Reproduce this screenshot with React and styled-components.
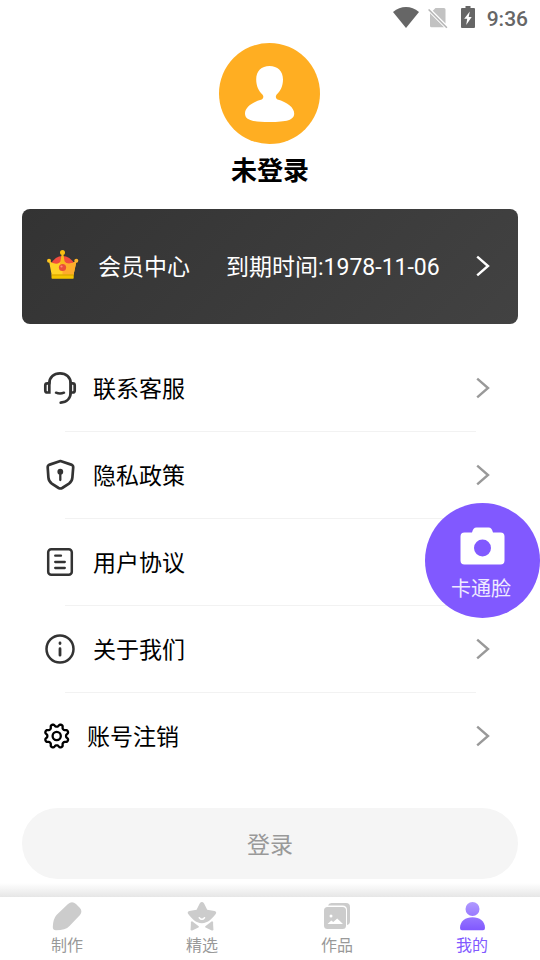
import React from 'react'
import styled, { createGlobalStyle } from 'styled-components'

const colours = {
  text: '#000000',
  icon: '#333333',
  status: '#666666',
  arrow: '#999999',
  divider: '#f2f2f2',
  orange: '#ffae22',
  purple: '#8159ff',
  tab: '#999999',
  tabIcon: '#cccccc',
  button: '#f5f5f5',
}

const GlobalStyle = createGlobalStyle`
  * {
    box-sizing: border-box;
  }

  body {
    background: #fff;
    color: ${colours.text};
    font-family: Roboto, "Noto Sans CJK SC", sans-serif;
    margin: 0;
  }

  svg {
    display: block;
    flex-shrink: 0;
    overflow: visible;
  }
`

// Status bar icons
const WifiIcon = () => (
  <svg width="26" height="22" viewBox="0 0 26 22" fill={colours.status}>
    <path d="M0 6Q6 1 13 1T26 6L13 22Z" />
  </svg>
)

const NoSimIcon = () => (
  <svg width="20" height="22" viewBox="0 0 20 22">
    <path d="M7.500 2H16Q17.500 2 17.500 3.500V17.500L4.800 4.800ZM2 7.300L16 21.300H3.500Q2 21.300 2 19.800Z" fill="#c2c2c2" />
    <path d="M.6 3.500L18.900 21.800" stroke="#b5b5b5" strokeWidth="1.600" />
  </svg>
)

const BatteryIcon = () => (
  <svg width="14" height="22" viewBox="0 0 14 22">
    <path d="M4.500 0H9.500V2H13Q14 2 14 3V21Q14 22 13 22H1Q0 22 0 21V3Q0 2 1 2H4.500Z" fill={colours.status} />
    <path d="M8.800 5.500L3.200 12.700H6.200L5.200 19L10.700 11H7.700Z" fill="#fff" />
  </svg>
)

const AvatarIcon = () => (
  <svg width="102" height="101" viewBox="0 0 102 101">
    <circle cx="50.500" cy="50.500" r="50.500" fill={colours.orange} />
    <path
      fill="#fff"
      d="M50.500 23C58.500 23 64 28 64 36.500C64 43 61.500 48 57.500 51.800C56.300 53.500 56.800 55.500 58.500 56.500C68 59 75.200 64.500 75.200 70.500C75.200 77 68 79 50.500 79C33 79 26 77 26 70.500C26 64.500 33 59 42.700 56.500C44.400 55.500 44.900 53.500 43.600 51.800C39.700 48 37.200 43 37.200 36.500C37.200 28 42.500 23 50.500 23Z"
    />
  </svg>
)

const CrownIcon = () => (
  <svg width="32" height="30" viewBox="0 0 32 30">
    <path d="M4 14Q8 6 15.500 6T27.500 14L22 19H9Z" fill="#f04c3e" />
    <path d="M2 11Q11 17 15.500 9.500Q20 17 29.500 11L26.500 25H4.700Z" fill="#ffd226" />
    <path d="M15.500 9.500Q20 17 29.500 11L26.500 25H15.500Z" fill="#ffac2c" />
    <path d="M4.500 24.500H26.700V28Q26.700 28.700 26 28.700H5.200Q4.500 28.700 4.500 28Z" fill="#f3c400" />
    <path d="M4.500 25H26.700" stroke="#cf9700" strokeWidth=".8" />
    <path d="M14.800 3H16.200L18 14H13Z" fill="#f9b81c" />
    <circle cx="15.500" cy="2.500" r="2.500" fill="#f7be12" />
    <circle cx="2" cy="10.800" r="2" fill="#ffc41d" />
    <circle cx="29.300" cy="10.800" r="2" fill="#ffb52a" />
    <circle cx="15.500" cy="17.500" r="3.600" fill="#e94d3a" />
    <circle cx="14.500" cy="16.500" r="1.100" fill="#ff8c74" />
  </svg>
)

const Chevron = ({ colour = colours.arrow }) => (
  <svg width="14" height="22" viewBox="0 0 14 22" fill="none" stroke={colour} strokeWidth="2.400">
    <path d="M1.200 1.700L12 11L1.200 20.300" />
  </svg>
)

// Menu icons
const HeadsetIcon = () => (
  <svg width="32" height="32" viewBox="0 0 32 32" fill="none" stroke={colours.icon} strokeWidth="2.700" strokeLinecap="round">
    <path d="M5.300 11.500C5.300 5 10 1.300 16 1.300S26.700 5 26.700 11.500V20C26.700 26.500 22.500 30.300 16.700 30.600" />
    <path d="M5.300 11.300H3.300Q1.300 11.300 1.300 13.300V18.500Q1.300 20.500 3.300 20.500H5.300Z" />
    <path d="M26.700 11.300H28.700Q30.700 11.300 30.700 13.300V18.500Q30.700 20.500 28.700 20.500H26.700Z" />
    <path d="M12 20.700Q16 22.400 20 20.700" strokeWidth="2.500" />
  </svg>
)

const ShieldIcon = () => (
  <svg width="32" height="32" viewBox="0 0 32 32" fill="none" stroke={colours.icon} strokeWidth="2.700" strokeLinejoin="round">
    <path d="M16.400 2L27.200 5.600Q29.300 6.400 29.200 8.500L28.400 18.500Q28.100 22.500 25 24.700L18.200 29Q16.400 30 14.600 29L7.800 24.700Q4.700 22.500 4.400 18.500L3.700 8.500Q3.600 6.400 5.700 5.600Z" />
    <circle cx="16.300" cy="12.700" r="2.900" fill={colours.icon} stroke="none" />
    <path d="M16.300 13V21" strokeWidth="2.300" strokeLinecap="round" />
  </svg>
)

const DocumentIcon = () => (
  <svg width="32" height="32" viewBox="0 0 32 32" fill="none" stroke={colours.icon} strokeWidth="2.500" strokeLinecap="round">
    <rect x="4.200" y="3.200" width="23.600" height="25.600" rx="3" />
    <path d="M11.200 9.700H17M11.200 16H20.800M11.200 22H20.800" strokeWidth="2.300" />
  </svg>
)

const InfoIcon = () => (
  <svg width="32" height="32" viewBox="0 0 32 32" fill="none" stroke={colours.icon} strokeWidth="2.500" strokeLinecap="round">
    <circle cx="16" cy="16" r="13.500" />
    <path d="M16 10V10.500M16 15.700V22.200" strokeWidth="2.800" />
  </svg>
)

const GearIcon = () => (
  <svg width="26" height="26" viewBox="0 0 26 26" fill="none" stroke="#000" strokeWidth="2.300" strokeLinejoin="round">
    <path d={gearPath(12.700, 10.700, 1.400)} />
    <circle cx="12.700" cy="13" r="4.100" />
  </svg>
)

// Eight teeth, with a notch at the top
function gearPath(centre, radius, depth) {
  const points = []
  for (let i = 0; i < 128; i++) {
    const a = (i / 128) * Math.PI * 2
    const r = radius - depth * Math.tanh(1.8 * Math.cos(a * 8))
    points.push(`${(centre + r * Math.cos(a)).toFixed(2)} ${(centre + 0.3 + r * Math.sin(a)).toFixed(2)}`)
  }
  return `M${points.join('L')}Z`
}

const CameraIcon = () => (
  <svg width="45" height="38" viewBox="0 0 45 38">
    <path d="M4 5.500H12C13 2 14 .5 16.500 .5H28.500C31 .5 32 2 33 5.500H40.500Q44.500 5.500 44.500 9.500V33.500Q44.500 37.500 40.500 37.500H4.500Q.5 37.500 .5 33.500V9.500Q.5 5.500 4.500 5.500Z" fill="#fff" />
    <circle cx="22.500" cy="21" r="8.500" fill={colours.purple} />
  </svg>
)

// Tab icons
const PencilIcon = () => (
  <svg width="30" height="29" viewBox="0 0 30 29">
    <path d="M16 2Q20 -1.300 24 2L27.500 5.500Q31 9 28 13L17.500 24Q13.500 28.300 4 28.300Q.8 28.300 .8 25Q1 17 4.500 13Z" fill={colours.tabIcon} />
  </svg>
)

const StarIcon = () => (
  <svg width="30" height="29" viewBox="0 0 30 29" fill={colours.tabIcon}>
    <path d="M12.700 1.500Q14.900 -1.300 17.100 1.500L20.200 7.700L27.500 9Q30.300 10 28.500 12.300C25.500 16 21 21.300 14.900 21.300S4.500 16 1.400 12.300Q-.4 10 2.400 9L9.600 7.700Z" />
    <path d="M5.500 19.500L11.700 24.200Q12.300 25 11.400 25.600L5.200 28.400Q3.600 28.800 3.600 27.200L4 20.200Q4.300 18.900 5.500 19.500Z" />
    <path d="M24.500 19.500L18.300 24.200Q17.700 25 18.600 25.600L24.800 28.400Q26.400 28.800 26.400 27.200L26 20.200Q25.700 18.900 24.500 19.500Z" />
    <path d="M12.300 15.700Q14.900 19 17.500 15.700" fill="none" stroke="#fff" strokeWidth="1.500" strokeLinecap="round" />
  </svg>
)

const GalleryIcon = () => (
  <svg width="30" height="29" viewBox="0 0 30 29">
    <path d="M6 3.500Q6.600 1 9.500 1H24Q28 1 28 5V19Q28 22.500 25 23V8Q25 3.500 20.500 3.500Z" fill={colours.tabIcon} />
    <rect x="2" y="5" width="22" height="22" rx="3.500" fill={colours.tabIcon} />
    <circle cx="9" cy="14" r="1.500" fill="#fff" />
    <path d="M5.500 22L9.300 18.600L11.300 20L15.200 16.500L21 22Z" fill="#fff" />
  </svg>
)

const ProfileIcon = () => (
  <svg width="30" height="29" viewBox="0 0 30 29">
    <defs>
      <linearGradient id="profile" x1="0" y1="0" x2="0" y2="29" gradientUnits="userSpaceOnUse">
        <stop offset="0" stopColor="#b09aff" />
        <stop offset="1" stopColor="#7f56ff" />
      </linearGradient>
    </defs>
    <g fill="url(#profile)">
      <circle cx="15.500" cy="7" r="7" />
      <path d="M3 26C3 19 8.500 15.200 15.500 15.200S28 19 28 26Q28 28.200 26 28.200H5Q3 28.200 3 26Z" />
    </g>
  </svg>
)

const menu = [
  { label: '联系客服', Icon: HeadsetIcon },
  { label: '隐私政策', Icon: ShieldIcon },
  { label: '用户协议', Icon: DocumentIcon },
  { label: '关于我们', Icon: InfoIcon },
  { label: '账号注销', Icon: GearIcon },
]

const tabs = [
  { label: '制作', Icon: PencilIcon },
  { label: '精选', Icon: StarIcon },
  { label: '作品', Icon: GalleryIcon },
  { label: '我的', Icon: ProfileIcon, active: true },
]

const App = () => (
  <Page>
    <GlobalStyle />
    <StatusBar>
      <WifiIcon />
      <NoSimIcon />
      <BatteryIcon />
      <Clock>9:36</Clock>
    </StatusBar>
    <Profile>
      <AvatarIcon />
      <UserName>未登录</UserName>
    </Profile>
    <MemberCard>
      <CrownIcon />
      <CardTitle>会员中心</CardTitle>
      <Expiry>到期时间:1978-11-06</Expiry>
      <Chevron colour="#fff" />
    </MemberCard>
    <Menu>
      {menu.map(({ label, Icon }) => (
        <MenuItem key={label}>
          <Icon />
          <MenuLabel>{label}</MenuLabel>
          <Chevron />
        </MenuItem>
      ))}
    </Menu>
    <LoginButton>登录</LoginButton>
    <TabShadow />
    <TabBar>
      {tabs.map(({ label, Icon, active }) => (
        <Tab key={label} $active={active}>
          <Icon />
          {label}
        </Tab>
      ))}
    </TabBar>
    <FloatingButton>
      <CameraIcon />
      <FloatingLabel>卡通脸</FloatingLabel>
    </FloatingButton>
  </Page>
)

const Page = styled.div`
  background: #fff;
  display: flex;
  flex-direction: column;
  height: 960px;
  overflow: hidden;
  position: relative;
  width: 540px;
`

const StatusBar = styled.header`
  align-items: center;
  display: flex;
  height: 34px;
  justify-content: flex-end;
  padding-right: 12px;

  svg + svg {
    margin-left: 9px;
  }

  svg:nth-of-type(3) {
    margin-left: 13px;
  }
`

const Clock = styled.span`
  color: ${colours.status};
  font-size: 21px;
  font-weight: 500;
  line-height: 24px;
  margin: 4px 0 0 12px;
`

const Profile = styled.section`
  align-items: center;
  display: flex;
  flex-direction: column;
  padding-top: 9px;
`

const UserName = styled.h1`
  font-size: 26px;
  font-weight: 700;
  line-height: 38px;
  margin: 8px 0 0;
`

const MemberCard = styled.section`
  align-items: center;
  background: linear-gradient(135deg, #333, #424242);
  border-radius: 8px;
  color: #fff;
  display: flex;
  font-size: 23px;
  height: 115px;
  line-height: 34px;
  margin: 19px 22px 0;
  padding: 0 28px 2px 25px;

  svg:first-child {
    margin-bottom: 2px;
  }
`

const CardTitle = styled.span`
  margin: 4px 0 0 19px;
`

const Expiry = styled.span`
  flex: 1;
  margin: 4px 0 0 36px;
`

const Menu = styled.ul`
  list-style: none;
  margin: 21px 0 0;
  padding: 0;
`

const MenuItem = styled.li`
  align-items: center;
  /* inset rule under every row but the last */
  background: linear-gradient(${colours.divider}, ${colours.divider}) 65px 100% / 411px 1px no-repeat;
  display: flex;
  height: 87px;
  padding: 0 50px 2px 44px;

  &:last-child {
    background: none;
  }
`

const MenuLabel = styled.span`
  flex: 1;
  font-size: 23px;
  line-height: 34px;
  margin: 5px 0 0 17px;
`

const LoginButton = styled.button`
  background: ${colours.button};
  border: 0;
  border-radius: 36px;
  color: ${colours.tab};
  flex-shrink: 0;
  font-family: inherit;
  font-size: 23px;
  height: 71px;
  margin: 28px 22px 0;
  padding: 0 0 2px;
`

const TabShadow = styled.div`
  background: linear-gradient(#fff, #e6e6e6);
  height: 14px;
  margin-top: 4px;
`

const TabBar = styled.nav`
  background: #fff;
  display: grid;
  grid-template-columns: repeat(4, 1fr);
  height: 63px;
`

const Tab = styled.a`
  align-items: center;
  color: ${props => (props.$active ? colours.purple : colours.tab)};
  display: flex;
  flex-direction: column;
  font-size: 16px;
  line-height: 24px;
  padding: 5px 1px 0 0;

  svg {
    margin-bottom: 3px;
  }
`

const FloatingButton = styled.button`
  align-items: center;
  background: ${colours.purple};
  border: 0;
  border-radius: 50%;
  color: #fff;
  display: flex;
  flex-direction: column;
  font-family: inherit;
  height: 115px;
  justify-content: flex-start;
  padding: 24px 0 0;
  position: absolute;
  right: 0;
  top: 503px;
  width: 115px;
`

const FloatingLabel = styled.span`
  font-size: 20px;
  line-height: 28px;
  margin: 10px 3px 0 0;
  opacity: 0.88;
`

export default App
